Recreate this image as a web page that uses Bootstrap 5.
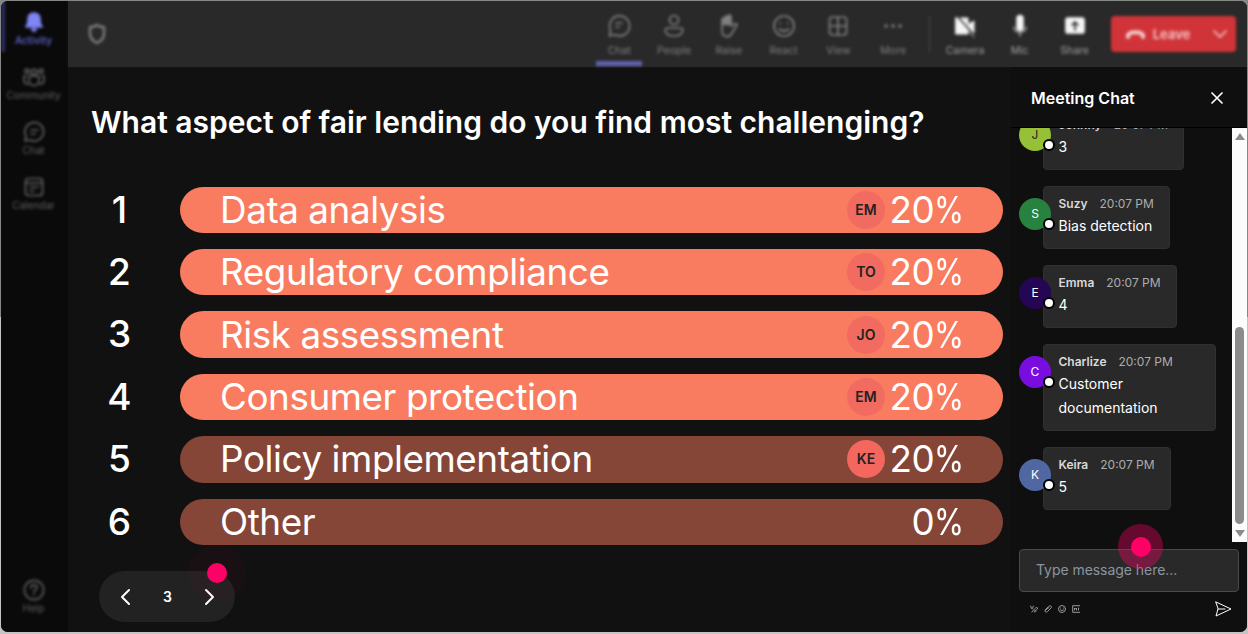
<!DOCTYPE html>
<html lang="en">
<head>
    <meta charset="utf-8">
    <title>Meeting Poll</title>
    <link href="https://cdn.jsdelivr.net/npm/bootstrap@5.3.0/dist/css/bootstrap.min.css" rel="stylesheet">
    <style>
        body { background: #d4d4d4; font-family: Inter, "Liberation Sans", sans-serif; color: #fff; }
        .page { width: 1248px; height: 634px; padding: 1px 1px 2px; background: linear-gradient(#858885 0 50%, #c4c4c4 50%); overflow: hidden; }
        .app { height: 631px; border-radius: 7px; background: #111; overflow: hidden; }
        svg { display: block; flex: none; fill: none; stroke: currentColor; stroke-width: 1.7; stroke-linecap: round; stroke-linejoin: round; }

        .rail { width: 67px; flex: none; padding-right: 2px; background: #0a0a0a; color: #616161; font-size: 10px; line-height: 14px; }
        .rail-item { height: 55px; padding-top: 10px; filter: blur(1.4px); }
        .rail-item.current { color: #5b5fc0; border-left: 4px solid #2c2e63; height: 51px; margin-bottom: 4px; padding-right: 4px; font-weight: 600; }
        .rail-item.current svg { color: #7f85f5; fill: currentColor; }
        .rail-help { margin-bottom: 8px; }

        .topbar { height: 66px; background: #292929; color: #808080; font-size: 10.5px; line-height: 14px; box-shadow: 0 1px 3px #161616; }
        .topbar-inner { filter: blur(1.4px); padding: 0 11px 0 19px; }
        .shield { stroke-width: 2.4; }
        .tool { width: 54.8px; height: 66px; padding-top: 12px; gap: 6px; }
        .tool.current { border-bottom: 5px solid #6063b3; width: 46px; height: 65px; margin: 0 4.4px 1px; }
        .tool.bright { color: #a0a0a0; }
        .tool.bright svg { color: #f5f5f5; }
        .tool-sep { width: 1px; height: 36px; background: #4c4c4c; margin: 0 8px; }
        .leave { width: 125px; height: 36px; background: #d13438; color: #f3c9ca; border-radius: 4px; font-size: 13px; font-weight: 600; padding: 0 9px 0 14px; margin-left: 9px; }

        .poll { padding: 37px 7px 8px 23px; }
        .poll h1 { font-size: 30px; font-weight: 600; line-height: 36px; margin: 0 0 46.5px; white-space: nowrap; }
        .answers { gap: 16px; }
        .rank { width: 40px; margin-right: 40.5px; margin-left: 8.5px; font-size: 37px; font-weight: 500; line-height: 46.4px; }
        .bar { width: 823px; flex: none; height: 46.4px; border-radius: 24px; background: #f97c60; padding: 0 39px 0 40px; font-size: 36.8px; line-height: 46px; letter-spacing: -.42px; }
        .bar.dim { background: #854638; }
        .percent { display: inline-block; margin-left: -6px; transform: scaleX(.83); transform-origin: right; }
        .who { width: 38px; height: 38px; background: #f26b60; color: #222; font-size: 14px; font-weight: 600; letter-spacing: 0; margin-right: 4.5px; }
        .who.lit { background: #f4675f; }
        .pager { width: 136px; height: 51px; border-radius: 26px; background: #222; margin: 26.1px 0 0 7.5px; padding: 0 17px 0 19px; font-size: 14px; font-weight: 600; }
        .pager svg { stroke-width: 2; }
        .tap { position: absolute; border-radius: 50%; }
        .tap::after { content: ""; position: absolute; top: 50%; left: 50%; width: 20px; height: 20px; margin: -10px; border-radius: 50%; background: #ff0066; }
        .tap-next { width: 58px; height: 58px; right: -11px; top: -27px; background: rgba(255, 0, 102, .035); }
        .tap-input { width: 45px; height: 45px; left: 98px; top: -26px; background: rgba(255, 0, 102, .36); }

        .chat { width: 236px; flex: none; background: #0f0f0f; }
        .chat-head { height: 60.5px; padding: 3px 23.5px 0 20px; border-bottom: 1.5px solid #000; font-size: 16px; font-weight: 600; }
        .feed { height: 414px; }
        .messages { padding: 0 0 32px 8px; gap: 16px; overflow: hidden; }
        .bubble { position: relative; background: #292929; border: 1px solid #303030; border-radius: 4px; margin-left: 23.5px; padding: 7px 15px 10px; font-size: 14px; line-height: 24px; height: 63px; flex: none; }
        .bubble.tall { height: 86.5px; width: 173.5px; }
        .bubble-top { font-size: 12px; line-height: 20px; color: #adadad; gap: 12px; white-space: nowrap; }
        .bubble-top b { color: #d9d9d9; font-weight: 600; }
        .face { position: absolute; left: -24.5px; top: 11px; width: 32px; height: 32px; font-size: 12px; border-radius: 50%; }
        .face::after { content: ""; position: absolute; left: 24px; top: 20px; width: 12px; height: 12px; border: 2px solid #000; border-radius: 50%; background: #fff; }
        .scroll { width: 15px; background: #fcfcfc; padding: 5px 3px; }
        .scroll svg { fill: #8b8b8b; stroke: none; }
        .thumb { width: 9px; height: 197px; border-radius: 5px; background: #8b8b8b; margin: auto 0 6px; }
        .composer { padding: 7.5px 8px 0; }
        .composer-box { position: relative; height: 43px; border: 1px solid #4a4a4a; border-radius: 4px; background: #292929; color: #8b95a1; font-size: 14px; letter-spacing: -.05px; padding-left: 16px; padding-bottom: 2px; }
        .composer-tools { height: 33px; padding: 0 7px 0 11px; gap: 6px; color: #999; }
        .composer-tools svg { stroke-width: 1; }
    </style>
</head>
<body>
<div class="page">
<div class="app d-flex">

    <!-- left rail -->
    <nav class="rail d-flex flex-column text-center">
        <div class="rail-item current d-flex flex-column align-items-center">
            <svg width="20" height="22" viewBox="0 0 20 22"><path d="M10 2c-4 0-6 3-6 6v4l-2 4h16l-2-4V8c0-3-2-6-6-6z"/><path d="M8 18a2 2 0 0 0 4 0z"/></svg>
            <span>Activity</span>
        </div>
        <div class="rail-item d-flex flex-column align-items-center">
            <svg width="24" height="22" viewBox="0 0 24 22"><circle cx="12" cy="6" r="2.7"/><circle cx="5" cy="5" r="2"/><circle cx="19" cy="5" r="2"/><path d="M7 10h10v5c0 6-10 6-10 0zM4 10H2v4c0 3 2 4 4 4M20 10h2v4c0 3-2 4-4 4"/></svg>
            <span>Community</span>
        </div>
        <div class="rail-item d-flex flex-column align-items-center">
            <svg width="22" height="22" viewBox="0 0 22 22"><path d="M2 20l1-5a9.3 9.3 0 1 1 4 4zM8 9h7M8 13h4"/></svg>
            <span>Chat</span>
        </div>
        <div class="rail-item d-flex flex-column align-items-center">
            <svg width="22" height="22" viewBox="0 0 22 22"><rect x="2.5" y="2.5" width="17" height="17" rx="3"/><path d="M3 7h16M7 11h8M7 15h4"/></svg>
            <span>Calendar</span>
        </div>
        <div class="rail-item rail-help mt-auto d-flex flex-column align-items-center">
            <svg width="24" height="22" viewBox="0 0 24 22"><circle cx="12" cy="11" r="9.7"/><path d="M9 9c0-4 6-4 6-.5 0 2-3 2.500-3 5M12 16v.3"/></svg>
            <span>Help</span>
        </div>
    </nav>

    <div class="flex-grow-1 d-flex flex-column">
        <!-- meeting toolbar -->
        <header class="topbar">
            <div class="topbar-inner d-flex align-items-center text-center">
                <svg class="shield me-auto" width="20" height="22" viewBox="0 0 20 22"><path d="M10 2c2 1.500 4 2 7 2.300V11c0 5-3 7-7 9-4-2-7-4-7-9V4.300C6 4 8 3.500 10 2z"/></svg>
                <div class="tool current d-flex flex-column align-items-center">
                    <svg width="24" height="25" viewBox="0 0 24 25"><path d="M2.500 23l1-6a10 10 0 1 1 4 4.500zM9 10h6M9 14h3"/></svg>
                    <span>Chat</span>
                </div>
                <div class="tool d-flex flex-column align-items-center">
                    <svg width="24" height="25" viewBox="0 0 24 25"><circle cx="12" cy="7" r="4.500"/><path d="M5 15h14c3 0 3 8-7 8s-10-8-7-8z"/></svg>
                    <span>People</span>
                </div>
                <div class="tool d-flex flex-column align-items-center">
                    <svg width="24" height="25" viewBox="0 0 24 25"><path d="M5 14V6q1.500-2 3 0V4q1.500-2 3 0V3q1.500-2 3 0v10l3-2q3-1 3 1l-5 8c-3 6-10 4-10-2z"/><path d="M6.500 7v4M9.500 4v7M12 4v7" stroke-width="3"/></svg>
                    <span>Raise</span>
                </div>
                <div class="tool d-flex flex-column align-items-center">
                    <svg width="24" height="25" viewBox="0 0 24 25"><circle cx="12" cy="13" r="10"/><path d="M8 10v.5M16 10v.5M7 16q5 4 10 0"/></svg>
                    <span>React</span>
                </div>
                <div class="tool d-flex flex-column align-items-center">
                    <svg width="24" height="25" viewBox="0 0 24 25"><rect x="3.500" y="4" width="17" height="18" rx="3"/><path d="M12 4v18M4 13h16"/></svg>
                    <span>View</span>
                </div>
                <div class="tool d-flex flex-column align-items-center">
                    <svg width="24" height="25" viewBox="0 0 24 25"><path d="M5 13h.1M12 13h.1M19 13h.1" stroke-width="3.500"/></svg>
                    <span>More</span>
                </div>
                <div class="tool-sep"></div>
                <div class="tool bright d-flex flex-column align-items-center">
                    <svg width="24" height="25" viewBox="0 0 24 25"><path d="M3 5h12v16H3zM16 11l5-3v12l-5-3z" fill="currentColor" stroke-width="1"/><path d="M5 4l17 19" stroke="#292929" stroke-width="1.500"/><path d="M3 4l18 20" stroke-width="1"/></svg>
                    <span>Camera</span>
                </div>
                <div class="tool bright d-flex flex-column align-items-center">
                    <svg width="24" height="25" viewBox="0 0 24 25"><path d="M12 5.500v9" stroke-width="7.500"/><path d="M6 14c0 7 12 7 12 0M12 20v3" stroke-width="1.600" stroke="#aaa"/></svg>
                    <span>Mic</span>
                </div>
                <div class="tool bright d-flex flex-column align-items-center">
                    <svg width="24" height="25" viewBox="0 0 24 25"><rect x="3" y="5" width="18" height="15" rx="2" fill="currentColor"/><path d="M12 17V9M9 12l3-3 3 3" stroke="#292929"/></svg>
                    <span>Share</span>
                </div>
                <div class="leave d-flex align-items-center justify-content-between">
                    <svg width="21" height="14" viewBox="0 0 21 14"><path d="M3 9c1-5 14-5 15 0" stroke-width="4"/><path d="M3 8v2M18 8v2" stroke-width="4"/></svg>
                    <span class="me-3">Leave</span>
                    <svg width="14" height="10" viewBox="0 0 14 10"><path d="M1 2l6 6 6-6"/></svg>
                </div>
            </div>
        </header>

        <div class="d-flex flex-grow-1">
            <!-- poll results -->
            <main class="poll flex-grow-1">
                <h1>What aspect of fair lending do you find most challenging?</h1>
                <div class="answers d-flex flex-column" id="answers"></div>
                <div class="pager position-relative d-flex align-items-center justify-content-between">
                    <svg width="14" height="18" viewBox="0 0 14 18"><path d="M11 2L4 9l7 7"/></svg>
                    <span>3</span>
                    <svg width="14" height="18" viewBox="0 0 14 18"><path d="M3 2l7 7-7 7"/></svg>
                    <span class="tap tap-next"></span>
                </div>
            </main>

            <!-- chat panel -->
            <aside class="chat">
                <div class="chat-head d-flex align-items-center justify-content-between">
                    <span>Meeting Chat</span>
                    <svg width="14" height="14" viewBox="0 0 14 14"><path d="M2 2l10 10M12 2L2 12"/></svg>
                </div>
                <div class="feed d-flex">
                    <div class="messages flex-grow-1 d-flex flex-column align-items-start justify-content-end" id="messages"></div>
                    <div class="scroll d-flex flex-column align-items-center">
                        <svg width="10" height="7" viewBox="0 0 10 7"><path d="M5 0l5 7H0z"/></svg>
                        <div class="thumb"></div>
                        <svg width="10" height="7" viewBox="0 0 10 7"><path d="M5 7L0 0h10z"/></svg>
                    </div>
                </div>
                <div class="composer">
                    <div class="composer-box d-flex align-items-center">
                        <span>Type message here...</span>
                        <span class="tap tap-input"></span>
                    </div>
                    <div class="composer-tools d-flex align-items-center">
                        <svg width="8" height="8" viewBox="0 0 8 8"><path d="M.5 1l1.500 3L3.500 1M2 7c1-2 5-6 5.500-4S5 5 4 6.500c0 1 2 0 2 0"/></svg>
                        <svg width="8" height="8" viewBox="0 0 8 8"><path d="M1 5l3.500-3.500C6-.2 8.500 1.500 7 3L3.500 6.500C2 8 .2 6.500 1.500 5L5 2.500"/></svg>
                        <svg width="8" height="8" viewBox="0 0 8 8"><circle cx="4" cy="4" r="3.500"/><path d="M2.500 3v.1M5.500 3v.1M2.500 5q1.500 1.500 3 0"/></svg>
                        <svg width="8" height="8" viewBox="0 0 8 8"><path d="M8 .7H.7v6.600H8M2.500 5V3l1 1 1-1v2M6.500 3v2"/></svg>
                        <svg class="ms-auto text-white" width="17" height="16" viewBox="0 0 17 16"><path d="M1 1l15 7L1 15l2-7zM3 8h7"/></svg>
                    </div>
                </div>
            </aside>
        </div>
    </div>
</div>
</div>

<script src="https://cdn.jsdelivr.net/npm/bootstrap@5.3.0/dist/js/bootstrap.bundle.min.js"></script>
<script>
const answers = [
    { text: 'Data analysis', who: 'EM', share: 20 },
    { text: 'Regulatory compliance', who: 'TO', share: 20 },
    { text: 'Risk assessment', who: 'JO', share: 20 },
    { text: 'Consumer protection', who: 'EM', share: 20 },
    { text: 'Policy implementation', who: 'KE', share: 20, dim: true },
    { text: 'Other', who: '', share: 0, dim: true }
];

const messages = [
    { name: 'Johnny', text: '3', color: '#96c136', ink: '#222' },
    { name: 'Suzy', text: 'Bias detection', color: '#27813f', ink: '#fff' },
    { name: 'Emma', text: '4', color: '#240654', ink: '#fff' },
    { name: 'Charlize', text: 'Customer documentation', color: '#790de0', ink: '#fff', tall: true },
    { name: 'Keira', text: '5', color: '#5067a1', ink: '#fff' }
];

document.getElementById('answers').innerHTML = answers.map((a, i) => `
    <div class="d-flex">
        <div class="rank text-center">${i + 1}</div>
        <div class="bar d-flex align-items-center ${a.dim ? 'dim' : ''}">
            <span class="me-auto">${a.text}</span>
            ${a.who ? `<span class="who rounded-circle d-flex align-items-center justify-content-center ${a.dim ? 'lit' : ''}">${a.who}</span>` : ''}
            <span>${a.share}<span class="percent">%</span></span>
        </div>
    </div>`).join('');

document.getElementById('messages').innerHTML = messages.map(m => `
    <div class="bubble ${m.tall ? 'tall' : ''}">
        <span class="face d-flex align-items-center justify-content-center" style="background:${m.color};color:${m.ink}">${m.name[0]}</span>
        <div class="bubble-top d-flex"><b>${m.name}</b><span>20:07 PM</span></div>
        <div>${m.text}</div>
    </div>`).join('');
</script>
</body>
</html>
